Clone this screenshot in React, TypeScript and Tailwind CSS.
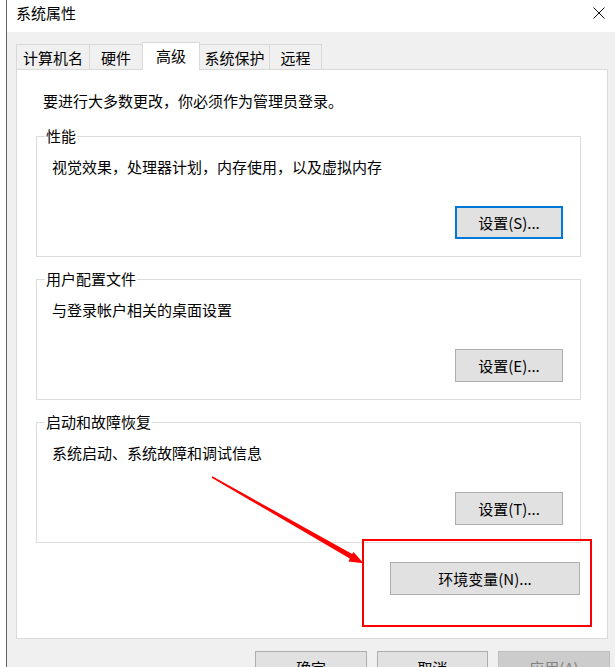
import React from "react";

const font = "font-['Noto_Sans_CJK_SC','Noto_Sans',sans-serif]";

function Btn({ label, focused, disabled, w }: { label: string; focused?: boolean; disabled?: boolean; w: string }) {
  const base = "h-[33px] flex items-center justify-center text-[15px] leading-[20px] shrink-0";
  let look = "bg-[#e1e1e1] border border-[#adadad] text-black";
  if (focused) look = "bg-[#e1e1e1] border-2 border-[#0078d7] text-black";
  if (disabled) look = "bg-[#cccccc] border border-[#bfbfbf] text-[#838383]";
  return <div className={`${base} ${look} ${w}`}>{label}</div>;
}

function Group({ title, desc, button, focused }: { title: string; desc: string; button: string; focused?: boolean }) {
  return (
    <fieldset className="w-[545px] border border-[#dcdcdc]">
      <legend className="ml-[8px] px-px text-[15px] leading-[18px]">{title}</legend>
      <div className="pt-[12px] pl-[15px] pr-[17px] pb-[17px]">
        <div className="text-[15px] leading-[20px]">{desc}</div>
        <div className="mt-[29px] flex justify-end">
          <Btn label={button} focused={focused} w="w-[108px]" />
        </div>
      </div>
    </fieldset>
  );
}

const tabs = [
  { name: "计算机名", w: "w-[74px]" },
  { name: "硬件", w: "w-[54px]" },
  { name: "高级", w: "w-[58px]", active: true },
  { name: "系统保护", w: "w-[71px]" },
  { name: "远程", w: "w-[53px]" },
];

export default function App() {
  return (
    <div className={`relative w-[615px] h-[667px] overflow-hidden bg-white flex text-black ${font}`}>
      <div className="w-[6px] bg-white shrink-0" />
      <div className="w-[609px] border-l border-[#646464] bg-[#f0f0f0] flex flex-col">
        {/* title bar */}
        <div className="h-[32px] bg-white flex justify-between shrink-0">
          <div className="pl-[9px] pt-[3px] text-[15px] leading-[20px]">系统属性</div>
          <svg width="12" height="12" viewBox="0 0 12 12" className="mt-[7px] mr-[10px]">
            <path d="M0.5 0.5 L11.5 11.5 M11.5 0.5 L0.5 11.5" stroke="#111" strokeWidth="1" fill="none" />
          </svg>
        </div>

        {/* tabs */}
        <div className="mt-[10px] ml-[9px] flex items-end h-[27px]">
          {tabs.map((t, i) =>
            t.active ? (
              <div
                key={t.name}
                className={`relative z-10 -ml-px -mb-px h-[28px] ${t.w} bg-white border-l border-t border-r border-[#d9d9d9] flex justify-center pt-[3px] text-[15px] leading-[20px]`}
              >
                {t.name}
              </div>
            ) : (
              <div
                key={t.name}
                className={`${i > 0 ? "-ml-px" : ""} h-[25px] ${t.w} bg-[#f0f0f0] border-l border-t border-r border-[#d9d9d9] flex justify-center pt-[3px] text-[15px] leading-[20px]`}
              >
                {t.name}
              </div>
            )
          )}
        </div>

        {/* panel */}
        <div className="ml-[9px] w-[592px] h-[570px] shrink-0 bg-white border border-[#d9d9d9] flex flex-col">
          <div className="pt-[21px] pl-[26px] text-[15px] leading-[20px]">要进行大多数更改，你必须作为管理员登录。</div>
          <div className="mt-[16px] pl-[19px] flex flex-col gap-[13px]">
            <Group title="性能" desc="视觉效果，处理器计划，内存使用，以及虚拟内存" button="设置(S)..." focused />
            <Group title="用户配置文件" desc="与登录帐户相关的桌面设置" button="设置(E)..." />
            <Group title="启动和故障恢复" desc="系统启动、系统故障和调试信息" button="设置(T)..." />
          </div>
          <div className="mt-[19px] pr-[27px] flex justify-end">
            <Btn label="环境变量(N)..." w="w-[190px]" />
          </div>
        </div>

        {/* dialog buttons */}
        <div className="mt-[12px] pr-[5px] flex justify-end gap-[10px]">
          <Btn label="确定" w="w-[112px]" />
          <Btn label="取消" w="w-[111px]" />
          <Btn label="应用(A)" disabled w="w-[112px]" />
        </div>
      </div>

      {/* annotation */}
      <div className="absolute left-[362px] top-[539px] w-[230px] h-[88px] border-2 border-[#ff0000]" />
      <svg className="absolute left-0 top-0 pointer-events-none" width="615" height="667" viewBox="0 0 615 667">
        <polygon
          points="211.6,477.7 212.4,476.3 352.2,554.0 353.5,551.9 363.5,563.3 348.5,561.5 349.8,558.4"
          fill="#ff0000"
        />
      </svg>
    </div>
  );
}
